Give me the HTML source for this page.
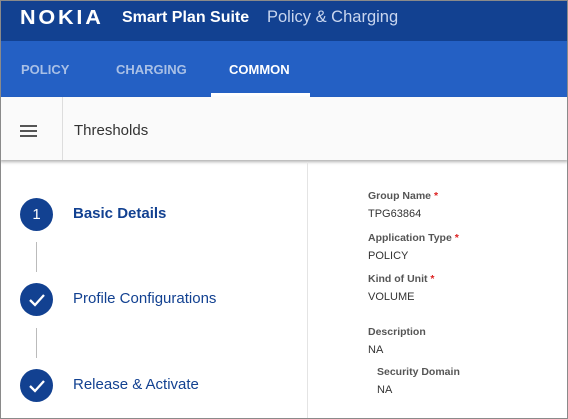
<!DOCTYPE html><html><head><style>
*{margin:0;padding:0;box-sizing:border-box}
body{width:568px;height:419px;overflow:hidden;font-family:"Liberation Sans",sans-serif;background:#fff;position:relative}
.frame{position:absolute;left:0;top:0;width:568px;height:419px;border:1px solid #8a8a8a}
.hdr{position:absolute;left:0;top:0;width:568px;height:41px;background:#124191;color:#fff}
.tabs{position:absolute;left:0;top:41px;width:568px;height:56px;background:#2460c4}
.tab{position:absolute;top:21px;font-weight:bold;font-size:13px;color:#a9c0e6}
.tb{position:absolute;left:0;top:97px;width:568px;height:63px;background:#fafafa;box-shadow:0 2px 3px rgba(0,0,0,.3)}
.a{position:absolute}
.c{position:absolute;left:20px;width:33px;height:33px;border-radius:50%;background:#124191;color:#fff;text-align:center;line-height:33px;font-size:15px}
.l{position:absolute;left:36px;width:1px;background:#bbb}
.s{position:absolute;left:73px;font-size:15px;color:#124191}
.lb{position:absolute;font-size:10.5px;font-weight:bold;color:#555}
.lb b{color:#d22}
.v{position:absolute;font-size:11px;color:#333}
</style></head><body>
<div class="hdr">
<div class="a" style="left:20px;top:7px;font-size:20px;font-weight:900;letter-spacing:2.6px;transform:scaleX(1.08);transform-origin:left">NOKIA</div>
<div class="a" style="left:122px;top:9px;font-size:16px;font-weight:bold">Smart Plan Suite</div>
<div class="a" style="left:267px;top:8px;font-size:16.5px;color:#c9d6ef">Policy &amp; Charging</div>
</div>
<div class="tabs">
<div class="tab" style="left:21px">POLICY</div>
<div class="tab" style="left:116px">CHARGING</div>
<div class="tab" style="left:229px;color:#fff">COMMON</div>
<div class="a" style="left:211px;top:52px;width:99px;height:4px;background:#fff"></div>
</div>
<div class="tb">
<div class="a" style="left:20px;top:28px;width:17px;height:2px;background:#555;box-shadow:0 5px 0 #555,0 10px 0 #555"></div>
<div class="a" style="left:62px;top:0;width:1px;height:63px;background:#ddd"></div>
<div class="a" style="left:74px;top:25px;font-size:15px;color:#333">Thresholds</div>
</div>
<div class="a" style="left:307px;top:162px;width:1px;height:257px;background:#e4e4e4"></div>
<div class="c" style="top:198px">1</div>
<div class="l" style="top:242px;height:30px"></div>
<div class="c" style="top:283px"><svg width="33" height="33"><path d="M10 17l5 5 9-10" fill="none" stroke="#fff" stroke-width="2.3"/></svg></div>
<div class="l" style="top:328px;height:30px"></div>
<div class="c" style="top:369px"><svg width="33" height="33"><path d="M10 17l5 5 9-10" fill="none" stroke="#fff" stroke-width="2.3"/></svg></div>
<div class="s" style="top:205px;font-weight:bold">Basic Details</div>
<div class="s" style="top:290px">Profile Configurations</div>
<div class="s" style="top:376px">Release &amp; Activate</div>
<div class="lb" style="left:368px;top:190px">Group Name <b>*</b></div>
<div class="v" style="left:368px;top:208px">TPG63864</div>
<div class="lb" style="left:368px;top:232px">Application Type <b>*</b></div>
<div class="v" style="left:368px;top:250px">POLICY</div>
<div class="lb" style="left:368px;top:273px">Kind of Unit <b>*</b></div>
<div class="v" style="left:368px;top:291px">VOLUME</div>
<div class="lb" style="left:368px;top:326px">Description</div>
<div class="v" style="left:368px;top:344px">NA</div>
<div class="lb" style="left:377px;top:366px">Security Domain</div>
<div class="v" style="left:377px;top:384px">NA</div>
<div class="frame"></div>
</body></html>
